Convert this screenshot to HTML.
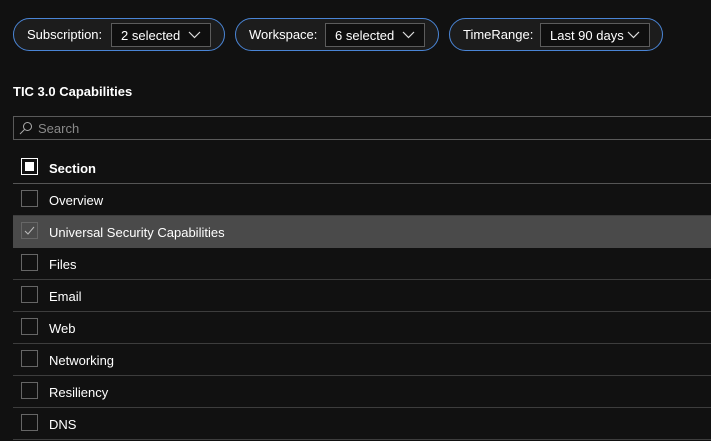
<!DOCTYPE html>
<html><head><style>
*{box-sizing:border-box;margin:0;padding:0}
body{width:711px;height:441px;background:#111;font-family:"Segoe UI","Liberation Sans",sans-serif;color:#fff;font-size:13px;position:relative;overflow:hidden}
.pill{position:absolute;top:18px;height:33px;border:1px solid #4a85d6;border-radius:17px;background:#1c1c1c;display:flex;align-items:center}
.pill .lbl{margin-left:13px;width:auto}
.dd{position:absolute;top:4px;height:24px;border:1px solid #5c5c5c;background:#0f0f0f;padding-left:9px;line-height:23px}
.dd svg{position:absolute;right:9px;top:7px}
.title{position:absolute;left:13px;top:84px;font-weight:bold;font-size:13px}
.search{position:absolute;left:13px;top:116px;width:700px;height:24px;border:1px solid #5a5a5a;color:#8a8a8a;line-height:23px;padding-left:24px}
.search svg{position:absolute;left:5px;top:4px}
.row{position:absolute;left:13px;width:700px;height:32px;border-bottom:1px solid #3d3d3d;line-height:33px;padding-left:36px}
.cb{position:absolute;left:8px;top:6px;width:17px;height:17px;border:1px solid #666}
.sel{background:#4a4a4a;border-bottom-color:#4a4a4a}
</style></head><body>
<div class="pill" style="left:13px;width:212px"><span class="lbl">Subscription:</span><div class="dd" style="left:97px;width:100px">2 selected<svg width="13" height="8"><path d="M1 1l5.5 5.5L12 1" stroke="#ddd" fill="none" stroke-width="1.2"/></svg></div></div>
<div class="pill" style="left:235px;width:204px"><span class="lbl">Workspace:</span><div class="dd" style="left:89px;width:100px">6 selected<svg width="13" height="8"><path d="M1 1l5.5 5.5L12 1" stroke="#ddd" fill="none" stroke-width="1.2"/></svg></div></div>
<div class="pill" style="left:449px;width:214px"><span class="lbl">TimeRange:</span><div class="dd" style="left:90px;width:110px">Last 90 days<svg width="13" height="8"><path d="M1 1l5.5 5.5L12 1" stroke="#ddd" fill="none" stroke-width="1.2"/></svg></div></div>
<div class="title">TIC 3.0 Capabilities</div>
<div class="search"><svg width="14" height="14"><circle cx="8.5" cy="5.5" r="4" stroke="#aaa" fill="none"/><path d="M5.5 8.5L1 13" stroke="#aaa"/></svg>Search</div>
<div class="row" style="top:152px;font-weight:bold;border-bottom-color:#555"><div class="cb" style="border:1px solid #fff;top:6px"><div style="position:absolute;left:3px;top:3px;width:9px;height:9px;background:#fff"></div></div>Section</div>
<div class="row" style="top:184px"><div class="cb"></div>Overview</div>
<div class="row sel" style="top:216px"><div class="cb"><svg width="15" height="15" style="position:absolute;left:0;top:0"><path d="M3 8l3 3 6-7" stroke="#bbb" fill="none"/></svg></div>Universal Security Capabilities</div>
<div class="row" style="top:248px"><div class="cb"></div>Files</div>
<div class="row" style="top:280px"><div class="cb"></div>Email</div>
<div class="row" style="top:312px"><div class="cb"></div>Web</div>
<div class="row" style="top:344px"><div class="cb"></div>Networking</div>
<div class="row" style="top:376px"><div class="cb"></div>Resiliency</div>
<div class="row" style="top:408px"><div class="cb"></div>DNS</div>
</body></html>
